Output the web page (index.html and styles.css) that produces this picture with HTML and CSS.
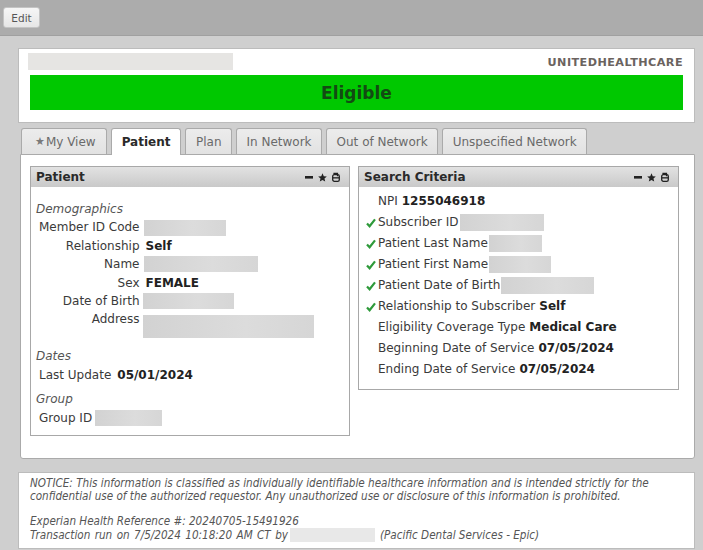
FILE: index.html
```html
<!DOCTYPE html>
<html>
<head>
<meta charset="utf-8">
<link rel="stylesheet" href="styles.css">
</head>
<body>
<div class="topbar"><button class="btn">Edit</button></div>
<div class="main">
  <div class="card header">
    <div class="hrow"><span class="redact r-title"></span><span class="payer">UNITEDHEALTHCARE</span></div>
    <div class="status">Eligible</div>
  </div>

  <div class="tabs">
    <div class="tab"><span class="tstar">★</span>My View</div>
    <div class="tab active">Patient</div>
    <div class="tab">Plan</div>
    <div class="tab">In Network</div>
    <div class="tab">Out of Network</div>
    <div class="tab">Unspecified Network</div>
  </div>

  <div class="tabpanel">
    <div class="box patient">
      <div class="boxhead"><span>Patient</span>
        <span class="icons">
          <svg width="8" height="3" viewBox="0 0 8 3"><rect width="8" height="2.6" fill="#222"/></svg>
          <svg width="9" height="9" viewBox="0 0 10 10"><path d="M5 0.3l1.4 3.2 3.4.3-2.6 2.3.8 3.4L5 7.7 2 9.5l.8-3.4L.2 3.8l3.4-.3z" fill="#222"/></svg>
          <svg width="8" height="10" viewBox="0 0 8 10"><rect x="0.7" y="2.7" width="6.6" height="6.6" rx="1.6" fill="none" stroke="#222" stroke-width="1.3"/><path d="M2 2.6V1.3h3.5v3" fill="none" stroke="#222" stroke-width="1.2"/><rect x="1" y="5.2" width="6" height="1.3" fill="#222"/></svg>
        </span>
      </div>
      <div class="boxbody">
        <div class="sect">
          <div class="sh">Demographics</div>
          <div class="kv">
            <span class="k">Member ID Code</span><span class="v"><span class="redact" style="width:82px"></span></span>
            <span class="k">Relationship</span><span class="v b">Self</span>
            <span class="k">Name</span><span class="v"><span class="redact" style="width:114px"></span></span>
            <span class="k">Sex</span><span class="v b">FEMALE</span>
            <span class="k">Date of Birth</span><span class="v"><span class="redact" style="width:91px;margin-left:-1px"></span></span>
            <span class="k">Address</span><span class="v"><span class="redact addr" style="width:171px;margin-left:-1px"></span></span>
          </div>
        </div>
        <div class="sect">
          <div class="sh">Dates</div>
          <div class="kv">
            <span class="k">Last Update</span><span class="v b">05/01/2024</span>
          </div>
        </div>
        <div class="sect">
          <div class="sh">Group</div>
          <div class="kv">
            <span class="k">Group ID</span><span class="v"><span class="redact" style="width:67px;margin-left:-1px"></span></span>
          </div>
        </div>
      </div>
    </div>

    <div class="box search">
      <div class="boxhead"><span>Search Criteria</span>
        <span class="icons">
          <svg width="8" height="3" viewBox="0 0 8 3"><rect width="8" height="2.6" fill="#222"/></svg>
          <svg width="9" height="9" viewBox="0 0 10 10"><path d="M5 0.3l1.4 3.2 3.4.3-2.6 2.3.8 3.4L5 7.7 2 9.5l.8-3.4L.2 3.8l3.4-.3z" fill="#222"/></svg>
          <svg width="8" height="10" viewBox="0 0 8 10"><rect x="0.7" y="2.7" width="6.6" height="6.6" rx="1.6" fill="none" stroke="#222" stroke-width="1.3"/><path d="M2 2.6V1.3h3.5v3" fill="none" stroke="#222" stroke-width="1.2"/><rect x="1" y="5.2" width="6" height="1.3" fill="#222"/></svg>
        </span>
      </div>
      <div class="boxbody crit">
        <div class="cr"><span class="ck"></span>NPI <b>1255046918</b></div>
        <div class="cr"><span class="ck"><svg width="10" height="10" viewBox="0 0 10 10"><path d="M1 5.4l2.6 2.8L9 1.4" fill="none" stroke="#2e9a3a" stroke-width="2.2"/></svg></span>Subscriber ID <span class="redact" style="width:84px;margin-left:2px"></span></div>
        <div class="cr"><span class="ck"><svg width="10" height="10" viewBox="0 0 10 10"><path d="M1 5.4l2.6 2.8L9 1.4" fill="none" stroke="#2e9a3a" stroke-width="2.2"/></svg></span>Patient Last Name<span class="redact" style="width:53px;margin-left:1px"></span></div>
        <div class="cr"><span class="ck"><svg width="10" height="10" viewBox="0 0 10 10"><path d="M1 5.4l2.6 2.8L9 1.4" fill="none" stroke="#2e9a3a" stroke-width="2.2"/></svg></span>Patient First Name<span class="redact" style="width:62px;margin-left:1px"></span></div>
        <div class="cr"><span class="ck"><svg width="10" height="10" viewBox="0 0 10 10"><path d="M1 5.4l2.6 2.8L9 1.4" fill="none" stroke="#2e9a3a" stroke-width="2.2"/></svg></span>Patient Date of Birth<span class="redact" style="width:93px;margin-left:1px"></span></div>
        <div class="cr"><span class="ck"><svg width="10" height="10" viewBox="0 0 10 10"><path d="M1 5.4l2.6 2.8L9 1.4" fill="none" stroke="#2e9a3a" stroke-width="2.2"/></svg></span>Relationship to Subscriber <b>Self</b></div>
        <div class="cr"><span class="ck"></span>Eligibility Coverage Type <b>Medical Care</b></div>
        <div class="cr"><span class="ck"></span>Beginning Date of Service <b>07/05/2024</b></div>
        <div class="cr"><span class="ck"></span>Ending Date of Service <b>07/05/2024</b></div>
      </div>
    </div>
  </div>

  <div class="card footer">
    <p>NOTICE: This information is classified as individually identifiable healthcare information and is intended strictly for the<br>confidential use of the authorized requestor. Any unauthorized use or disclosure of this information is prohibited.</p>
    <p>Experian Health Reference #: 20240705-15491926<br><span class="txn">Transaction run on 7/5/2024 10:18:20 AM CT by</span><span class="redact fr"></span>(Pacific Dental Services - Epic)</p>
  </div>
</div>
</body>
</html>
```

FILE: styles.css
```css
* { box-sizing: border-box; }
html, body { margin: 0; padding: 0; }
body {
  background: #cfcfcf;
  font-family: "DejaVu Sans", Verdana, sans-serif;
  font-size: 12px;
  color: #333;
  overflow: hidden;
  height: 550px;
}
.topbar {
  height: 36px;
  background: #acacac;
  border-bottom: 1px solid #a0a0a0;
  padding: 7px 0 0 3px;
}
.btn {
  display: block;
  width: 37px;
  height: 21px;
  padding: 0;
  border: 1px solid #c4c4c4;
  border-radius: 3px;
  background: linear-gradient(#f6f6f6, #e6e6e6);
  font-family: "DejaVu Sans", sans-serif;
  font-size: 10.5px;
  color: #555;
}
.main {
  padding: 12px 8px 0 18px;
}
.card {
  background: #fff;
  border: 1px solid #bcbcbc;
}
.header {
  padding: 4px 11px 12px 11px;
}
.hrow {
  display: flex;
  justify-content: space-between;
  align-items: center;
  height: 17px;
}
.redact {
  display: inline-block;
  height: 16px;
  background: linear-gradient(90deg, #d2d2d2, #dcdcdc 60%, #d6d6d6);
  vertical-align: middle;
}
.r-title {
  width: 205px;
  height: 17px;
  margin-left: -2px;
  background: #e6e5e3;
}
.payer {
  font-weight: bold;
  font-size: 11.2px;
  letter-spacing: 0.45px;
  color: #6b635f;
  padding-top: 1px;
}
.status {
  margin-top: 5px;
  height: 35px;
  background: #00c800;
  color: #134a13;
  font-weight: bold;
  font-size: 17px;
  display: flex;
  align-items: center;
  justify-content: center;
}
.tabs {
  display: flex;
  gap: 4px;
  margin: 5px 0 0 3px;
  height: 26px;
  position: relative;
  z-index: 1;
}
.tab {
  height: 26px;
  padding: 0 9.5px;
  border: 1px solid #aaa;
  border-bottom: none;
  border-radius: 3px 3px 0 0;
  background: linear-gradient(#ececec, #e2e2e2);
  color: #6a6a6a;
  display: flex;
  align-items: center;
  line-height: 1;
}
.tab:first-child { padding: 0 10px 0 13px; }
.tab.active {
  background: #fff;
  color: #2a2a2a;
  font-weight: bold;
  height: 27px;
  padding: 0 10px;
}
.tstar { color: #7a7a7a; font-size: 11px; margin-right: 1px; }
.tabpanel {
  margin-left: 2px;
  background: #fff;
  border: 1px solid #aaa;
  border-radius: 0 0 3px 3px;
  height: 305px;
  padding: 11px 9px 0 9px;
  display: flex;
  align-items: flex-start;
  gap: 8px;
}
.box {
  border: 1px solid #a8a8a8;
  background: #fff;
}
.patient { width: 320px; }
.search { width: 321px; }
.boxhead {
  height: 20px;
  background: linear-gradient(#e2e2e2, #c9c9c9);
  display: flex;
  align-items: center;
  justify-content: space-between;
  padding: 0 9px 0 5px;
  font-weight: bold;
  color: #2a2a2a;
}
.icons {
  display: flex;
  align-items: center;
  gap: 5px;
}
.boxbody { padding: 13px 5px 8px 5px; }
.sect + .sect { margin-top: 6px; }
.sh {
  font-style: italic;
  color: #555;
  line-height: 18.4px;
}
.kv {
  display: grid;
  grid-template-columns: auto 1fr;
  column-gap: 4px;
  padding-left: 3px;
  line-height: 18.4px;
  align-items: start;
}
.k { text-align: right; color: #3a3a3a; }
.v { color: #222; min-height: 18.4px; display: flex; align-items: center; }
.v.b { font-weight: bold; padding-left: 2px; }
.addr { height: 23px; margin-top: 5px; margin-bottom: 3px; }
.crit { padding: 4px 5px 9px 7px; }
.cr {
  line-height: 21px;
  height: 21px;
  display: flex;
  align-items: center;
  white-space: nowrap;
  color: #3a3a3a;
}
.cr b { color: #222; margin-left: 4px; }
.ck {
  width: 12px;
  flex: none;
  display: flex;
  align-items: center;
}
.cr .redact { height: 17px; }
.footer {
  margin-top: 13px;
  padding: 4px 11px 6px 11px;
  font-family: "DejaVu Sans Condensed", "DejaVu Sans", sans-serif;
  font-stretch: condensed;
  font-style: italic;
  font-size: 11.6px;
  color: #555;
  line-height: 13px;
  white-space: nowrap;
}
.footer p { margin: 0; }
.footer p + p { margin-top: 12px; }
.txn { word-spacing: 1.1px; }
.fr { width: 85px; height: 14px; margin: 0 5px 0 2px; vertical-align: -3px; background: #e8e8e8; }
```
